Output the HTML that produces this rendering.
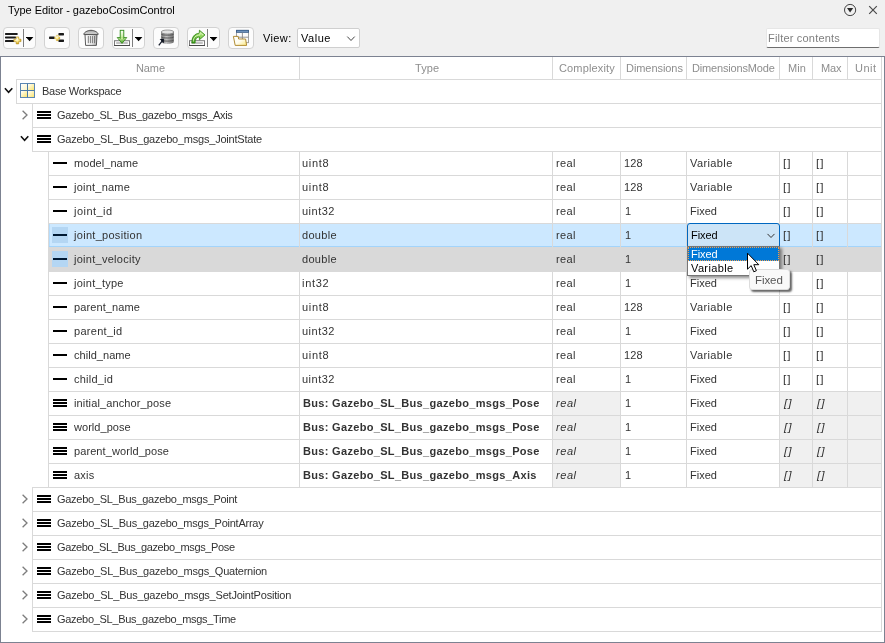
<!DOCTYPE html>
<html><head><meta charset="utf-8"><title>Type Editor</title>
<style>
html,body{margin:0;padding:0}
body{width:885px;height:643px;overflow:hidden;background:#f0f0f0;position:relative;font-family:"Liberation Sans",sans-serif;font-size:11px}
.b{position:absolute;display:block}
.t{position:absolute;white-space:nowrap;display:block;will-change:transform}
.btn{position:absolute;top:27px;height:20px;border:1px solid #d2d2d2;border-radius:4px;background:#fcfcfc}
</style></head><body>
<!-- title bar icons -->
<svg class="b" style="left:843px;top:3px" width="14" height="14" viewBox="0 0 14 14"><circle cx="7.1" cy="7" r="5.6" fill="none" stroke="#444" stroke-width="1"/><path d="M4 5.1 H10.2 L7.1 9.6 Z" fill="#2b2b2b"/></svg>
<svg class="b" style="left:868px;top:5px" width="10" height="10" viewBox="0 0 10 10"><path d="M1.2 1.2 L8.8 8.8 M8.8 1.2 L1.2 8.8" stroke="#4a4a4a" stroke-width="1.2" fill="none"/></svg>

<!-- toolbar buttons -->
<div class="btn" style="left:3px;width:31px"></div>
<div class="btn" style="left:44px;width:24px"></div>
<div class="btn" style="left:78px;width:24px"></div>
<div class="btn" style="left:112px;width:31px"></div>
<div class="btn" style="left:153px;width:24px"></div>
<div class="btn" style="left:187px;width:31px"></div>
<div class="btn" style="left:228px;width:24px"></div>
<div class="b" style="left:23px;top:29px;width:1px;height:18px;background:#7d7d7d"></div>
<div class="b" style="left:132px;top:29px;width:1px;height:18px;background:#7d7d7d"></div>
<div class="b" style="left:207px;top:29px;width:1px;height:18px;background:#7d7d7d"></div>
<svg class="b" style="left:26px;top:37px" width="8" height="5" viewBox="0 0 8 5"><path d="M-0.2 0 H7.4 L3.6 4.2 Z" fill="#000"/></svg>
<svg class="b" style="left:135px;top:37px" width="8" height="5" viewBox="0 0 8 5"><path d="M-0.2 0 H7.4 L3.6 4.2 Z" fill="#000"/></svg>
<svg class="b" style="left:210px;top:37px" width="8" height="5" viewBox="0 0 8 5"><path d="M-0.2 0 H7.4 L3.6 4.2 Z" fill="#000"/></svg>

<!-- icon 1: add bus (lines + plus) -->
<svg class="b" style="left:4px;top:30px" width="19" height="16" viewBox="0 0 19 16">
  <defs><radialGradient id="gold" cx="0.4" cy="0.35" r="0.7"><stop offset="0" stop-color="#ffffff"/><stop offset="0.45" stop-color="#fbe88a"/><stop offset="1" stop-color="#c99a10"/></radialGradient></defs>
  <rect x="1" y="3.1" width="12.7" height="1.8" rx="0.6" fill="#1c1c1c"/>
  <rect x="1" y="6.5" width="11" height="1.9" rx="0.6" fill="#1c1c1c"/>
  <rect x="1" y="10.1" width="9" height="1.9" rx="0.6" fill="#1c1c1c"/>
  <path d="M12.2 6.9 h2.5 v2.3 h2.3 v2.4 h-2.3 v2.3 h-2.5 v-2.3 h-2.3 v-2.4 h2.3 z" fill="url(#gold)" stroke="#b98d10" stroke-width="0.6"/>
</svg>
<!-- icon 2: add element -->
<svg class="b" style="left:47px;top:30px" width="20" height="16" viewBox="0 0 20 16">
  <rect x="2.1" y="6.6" width="5.6" height="2.5" rx="0.6" fill="#1a1a1a"/>
  <rect x="11.4" y="3.1" width="5.6" height="2.3" rx="0.6" fill="#1a1a1a"/>
  <rect x="11.4" y="9.5" width="5.6" height="2.4" rx="0.6" fill="#1a1a1a"/>
  <path d="M9.3 5.2 h2 v1.7 h1.6 v2 h-1.6 v1.8 h-2 v-1.8 h-1.6 v-2 h1.6 z" fill="url(#gold)" stroke="#d4ae2c" stroke-width="0.3"/>
</svg>
<!-- icon 3: trash -->
<svg class="b" style="left:82px;top:29px" width="18" height="18" viewBox="0 0 18 18">
  <defs><linearGradient id="tr" x1="0" y1="0" x2="1" y2="0"><stop offset="0" stop-color="#ffffff"/><stop offset="0.55" stop-color="#ededed"/><stop offset="1" stop-color="#a8a8a8"/></linearGradient>
  <linearGradient id="lid" x1="0" y1="0" x2="0" y2="1"><stop offset="0" stop-color="#9a9a9a"/><stop offset="1" stop-color="#e9e9e9"/></linearGradient></defs>
  <path d="M3 5.6 L3.6 16.4 H14.4 L15 5.6 Z" fill="url(#tr)" stroke="#4a4a4a" stroke-width="0.9"/>
  <path d="M1.8 5.4 C1.8 3.4 5.6 1.3 9 1.3 C12.4 1.3 16.2 3.4 16.2 5.4 Z" fill="url(#lid)" stroke="#444" stroke-width="0.9"/>
  <path d="M6.3 7 V14.2 M8.4 7 V14.2 M10.4 7 V14.2 M12.5 7 V14.2" stroke="#6f6f6f" stroke-width="0.9"/>
</svg>
<!-- icon 4: import (green down arrow + tray) -->
<svg class="b" style="left:113px;top:29px" width="18" height="18" viewBox="0 0 18 18">
  <defs><linearGradient id="gr" x1="0" y1="0" x2="0" y2="1"><stop offset="0" stop-color="#d6f3b0"/><stop offset="1" stop-color="#3a9a17"/></linearGradient>
  <linearGradient id="grs" x1="0" y1="0" x2="0" y2="1"><stop offset="0" stop-color="#ffffff"/><stop offset="1" stop-color="#bfe88f"/></linearGradient></defs>
  <rect x="1.5" y="11.7" width="15" height="4.8" fill="#fdfdfd" stroke="#7a7a7a" stroke-width="1"/>
  <path d="M1 16.5 H17" stroke="#4a4a4a" stroke-width="1"/>
  <rect x="3.2" y="13.2" width="11.6" height="1.6" fill="#b4b4b4"/>
  <path d="M4.2 8.5 H13.8 L9 14.4 Z" fill="url(#gr)" stroke="#2f8416" stroke-width="0.8"/>
  <rect x="7.2" y="1.3" width="3.6" height="8" fill="url(#grs)" stroke="#2f8a1a" stroke-width="0.9"/>
  <path d="M7.7 8.6 H10.3 V10 H7.7 Z" fill="#c4ea96"/>
</svg>
<!-- icon 5: database with arrow -->
<svg class="b" style="left:157px;top:29px" width="19" height="18" viewBox="0 0 19 18">
  <defs><linearGradient id="db" x1="0" y1="0" x2="1" y2="0"><stop offset="0" stop-color="#707070"/><stop offset="0.4" stop-color="#c2c2c2"/><stop offset="1" stop-color="#6c6c6c"/></linearGradient></defs>
  <path d="M4.2 3 V12.8 C4.2 14.2 7.2 14.9 10.5 14.9 C13.8 14.9 16.8 14.2 16.8 12.8 V3 Z" fill="url(#db)"/>
  <ellipse cx="10.5" cy="3" rx="6.3" ry="2" fill="#e2e2e2" stroke="#777" stroke-width="0.7"/>
  <path d="M4.2 5 C4.2 6.6 16.8 6.6 16.8 5 M4.2 7.8 C4.2 9.4 16.8 9.4 16.8 7.8 M4.2 10.9 C4.2 12.5 16.8 12.5 16.8 10.9" fill="none" stroke="#505050" stroke-width="0.9"/>
  <path d="M1.8 16.4 L5.6 11.4" stroke="#1c2230" stroke-width="1.3"/>
  <path d="M2.6 10 L6.9 9.7 L6.9 14.2 Z" fill="#0e1420"/>
</svg>
<!-- icon 6: export (green curved arrow + tray) -->
<svg class="b" style="left:188px;top:29px" width="18" height="18" viewBox="0 0 18 18">
  <defs><linearGradient id="gr2" x1="0" y1="1" x2="1" y2="0"><stop offset="0" stop-color="#2f8f12"/><stop offset="0.6" stop-color="#8fd45a"/><stop offset="1" stop-color="#c8f09a"/></linearGradient></defs>
  <rect x="1.5" y="11.7" width="15" height="4.8" fill="#fdfdfd" stroke="#7a7a7a" stroke-width="1"/>
  <path d="M1 16.5 H17" stroke="#4a4a4a" stroke-width="1"/>
  <rect x="3.2" y="13.2" width="11.6" height="1.6" fill="#b4b4b4"/>
  <path d="M3.9 14 C3.6 8.4 6.2 4.6 11.4 4.2 V1.2 L17 5.9 L11.4 10.8 V8 C8.9 8.1 7.2 9.8 7.1 14 Z" fill="url(#gr2)" stroke="#2e8512" stroke-width="0.8"/>
  <path d="M5.3 12.6 C5.4 8.6 7.6 6.2 12 6 L12 3.6 L15 6" fill="none" stroke="#e4f8c8" stroke-width="1" opacity="0.85"/>
</svg>
<!-- icon 7: table + folder -->
<svg class="b" style="left:232px;top:29px" width="19" height="18" viewBox="0 0 19 18">
  <defs><linearGradient id="fo" x1="0" y1="0" x2="1" y2="1"><stop offset="0" stop-color="#ffffff"/><stop offset="0.5" stop-color="#fffdf0"/><stop offset="1" stop-color="#fce97f"/></linearGradient></defs>
  <rect x="4.5" y="1.3" width="12" height="12.4" fill="#fbfbfb" stroke="#8c8c8c" stroke-width="0.8"/>
  <rect x="4.1" y="0.9" width="12.8" height="2.9" fill="#365a86"/>
  <rect x="5" y="1.8" width="11" height="0.9" fill="#86a9d2"/>
  <path d="M10.4 3.8 V13.6 M4.5 8.2 H16.5" stroke="#8a8a8a" stroke-width="0.9"/>
  <path d="M1.4 7.4 H6.2 L6.6 10 H13.6 L14.6 16.4 H3.2 Z" fill="url(#fo)" stroke="#a8801f" stroke-width="0.9"/>
</svg>

<!-- view select -->
<div class="b" style="left:297px;top:28px;width:61px;height:18px;background:#fff;border:1px solid #cfcfcf;border-radius:2px"></div>
<svg class="b" style="left:346px;top:35px" width="10" height="7" viewBox="0 0 10 7"><path d="M1.3 1.6 L5 5.5 L8.7 1.6" fill="none" stroke="#444" stroke-width="1"/></svg>
<!-- filter box -->
<div class="b" style="left:766px;top:28px;width:112px;height:18px;background:#fff;border:1px solid #e6e6e6;border-bottom:1px solid #6e6e6e;border-radius:2px"></div>

<div class="b" style="left:0;top:56px;width:883px;height:585px;background:#fff;border:1px solid #7c8291"></div>
<div class="b" style="left:553px;top:392px;width:67px;height:23px;background:#f0f0f0;"></div>
<div class="b" style="left:780px;top:392px;width:32px;height:23px;background:#f0f0f0;"></div>
<div class="b" style="left:813px;top:392px;width:34px;height:23px;background:#f0f0f0;"></div>
<div class="b" style="left:848px;top:392px;width:33px;height:23px;background:#f0f0f0;"></div>
<div class="b" style="left:553px;top:416px;width:67px;height:23px;background:#f0f0f0;"></div>
<div class="b" style="left:780px;top:416px;width:32px;height:23px;background:#f0f0f0;"></div>
<div class="b" style="left:813px;top:416px;width:34px;height:23px;background:#f0f0f0;"></div>
<div class="b" style="left:848px;top:416px;width:33px;height:23px;background:#f0f0f0;"></div>
<div class="b" style="left:553px;top:440px;width:67px;height:23px;background:#f0f0f0;"></div>
<div class="b" style="left:780px;top:440px;width:32px;height:23px;background:#f0f0f0;"></div>
<div class="b" style="left:813px;top:440px;width:34px;height:23px;background:#f0f0f0;"></div>
<div class="b" style="left:848px;top:440px;width:33px;height:23px;background:#f0f0f0;"></div>
<div class="b" style="left:553px;top:464px;width:67px;height:23px;background:#f0f0f0;"></div>
<div class="b" style="left:780px;top:464px;width:32px;height:23px;background:#f0f0f0;"></div>
<div class="b" style="left:813px;top:464px;width:34px;height:23px;background:#f0f0f0;"></div>
<div class="b" style="left:848px;top:464px;width:33px;height:23px;background:#f0f0f0;"></div>
<div class="b" style="left:49px;top:224px;width:832px;height:23px;background:#cce8ff;box-shadow:inset 0 -1px 0 #a3d4fb, inset 1px 0 0 #b5dcfc"></div>
<div class="b" style="left:49px;top:247px;width:832px;height:24px;background:#d9d9d9;"></div>
<div class="b" style="left:52px;top:227px;width:16px;height:16px;background:#b4d6f3;"></div>
<div class="b" style="left:52px;top:251px;width:16px;height:16px;background:#b4d6f3;"></div>
<div class="b" style="left:16px;top:79px;width:866px;height:1px;background:#d9d9d9;"></div>
<div class="b" style="left:299px;top:57px;width:1px;height:22px;background:#d9d9d9;"></div>
<div class="b" style="left:552px;top:57px;width:1px;height:22px;background:#d9d9d9;"></div>
<div class="b" style="left:620px;top:57px;width:1px;height:22px;background:#d9d9d9;"></div>
<div class="b" style="left:686px;top:57px;width:1px;height:22px;background:#d9d9d9;"></div>
<div class="b" style="left:779px;top:57px;width:1px;height:22px;background:#d9d9d9;"></div>
<div class="b" style="left:812px;top:57px;width:1px;height:22px;background:#d9d9d9;"></div>
<div class="b" style="left:847px;top:57px;width:1px;height:22px;background:#d9d9d9;"></div>
<div class="b" style="left:881px;top:57px;width:1px;height:575px;background:#d9d9d9;"></div>
<div class="b" style="left:16px;top:79px;width:1px;height:25px;background:#d9d9d9;"></div>
<div class="b" style="left:16px;top:103px;width:866px;height:1px;background:#d9d9d9;"></div>
<div class="b" style="left:32px;top:103px;width:1px;height:49px;background:#d9d9d9;"></div>
<div class="b" style="left:32px;top:127px;width:850px;height:1px;background:#d9d9d9;"></div>
<div class="b" style="left:32px;top:151px;width:850px;height:1px;background:#d9d9d9;"></div>
<div class="b" style="left:48px;top:151px;width:1px;height:337px;background:#d9d9d9;"></div>
<div class="b" style="left:48px;top:175px;width:834px;height:1px;background:#d9d9d9;"></div>
<div class="b" style="left:48px;top:199px;width:834px;height:1px;background:#d9d9d9;"></div>
<div class="b" style="left:48px;top:223px;width:834px;height:1px;background:#d9d9d9;"></div>
<div class="b" style="left:48px;top:247px;width:834px;height:1px;background:#d9d9d9;"></div>
<div class="b" style="left:48px;top:271px;width:834px;height:1px;background:#d9d9d9;"></div>
<div class="b" style="left:48px;top:295px;width:834px;height:1px;background:#d9d9d9;"></div>
<div class="b" style="left:48px;top:319px;width:834px;height:1px;background:#d9d9d9;"></div>
<div class="b" style="left:48px;top:343px;width:834px;height:1px;background:#d9d9d9;"></div>
<div class="b" style="left:48px;top:367px;width:834px;height:1px;background:#d9d9d9;"></div>
<div class="b" style="left:48px;top:391px;width:834px;height:1px;background:#d9d9d9;"></div>
<div class="b" style="left:48px;top:415px;width:834px;height:1px;background:#d9d9d9;"></div>
<div class="b" style="left:48px;top:439px;width:834px;height:1px;background:#d9d9d9;"></div>
<div class="b" style="left:48px;top:463px;width:834px;height:1px;background:#d9d9d9;"></div>
<div class="b" style="left:32px;top:487px;width:850px;height:1px;background:#d9d9d9;"></div>
<div class="b" style="left:32px;top:487px;width:1px;height:145px;background:#d9d9d9;"></div>
<div class="b" style="left:32px;top:511px;width:850px;height:1px;background:#d9d9d9;"></div>
<div class="b" style="left:32px;top:535px;width:850px;height:1px;background:#d9d9d9;"></div>
<div class="b" style="left:32px;top:559px;width:850px;height:1px;background:#d9d9d9;"></div>
<div class="b" style="left:32px;top:583px;width:850px;height:1px;background:#d9d9d9;"></div>
<div class="b" style="left:32px;top:607px;width:850px;height:1px;background:#d9d9d9;"></div>
<div class="b" style="left:32px;top:631px;width:850px;height:1px;background:#d9d9d9;"></div>
<div class="b" style="left:299px;top:152px;width:1px;height:95px;background:#d9d9d9;"></div>
<div class="b" style="left:299px;top:271px;width:1px;height:216px;background:#d9d9d9;"></div>
<div class="b" style="left:552px;top:152px;width:1px;height:95px;background:#d9d9d9;"></div>
<div class="b" style="left:552px;top:271px;width:1px;height:216px;background:#d9d9d9;"></div>
<div class="b" style="left:620px;top:152px;width:1px;height:95px;background:#d9d9d9;"></div>
<div class="b" style="left:620px;top:271px;width:1px;height:216px;background:#d9d9d9;"></div>
<div class="b" style="left:686px;top:152px;width:1px;height:95px;background:#d9d9d9;"></div>
<div class="b" style="left:686px;top:271px;width:1px;height:216px;background:#d9d9d9;"></div>
<div class="b" style="left:779px;top:152px;width:1px;height:95px;background:#d9d9d9;"></div>
<div class="b" style="left:779px;top:271px;width:1px;height:216px;background:#d9d9d9;"></div>
<div class="b" style="left:812px;top:152px;width:1px;height:95px;background:#d9d9d9;"></div>
<div class="b" style="left:812px;top:271px;width:1px;height:216px;background:#d9d9d9;"></div>
<div class="b" style="left:847px;top:152px;width:1px;height:95px;background:#d9d9d9;"></div>
<div class="b" style="left:847px;top:271px;width:1px;height:216px;background:#d9d9d9;"></div>
<div class="b" style="left:37px;top:111px;width:14px;height:2px;background:#000;box-shadow:0 3px 0 #000,0 6px 0 #000"></div>
<div class="b" style="left:37px;top:135px;width:14px;height:2px;background:#000;box-shadow:0 3px 0 #000,0 6px 0 #000"></div>
<div class="b" style="left:53px;top:162px;width:14px;height:2px;background:#000"></div>
<div class="b" style="left:53px;top:186px;width:14px;height:2px;background:#000"></div>
<div class="b" style="left:53px;top:210px;width:14px;height:2px;background:#000"></div>
<div class="b" style="left:53px;top:234px;width:14px;height:2px;background:#001933"></div>
<div class="b" style="left:53px;top:258px;width:14px;height:2px;background:#001933"></div>
<div class="b" style="left:53px;top:282px;width:14px;height:2px;background:#000"></div>
<div class="b" style="left:53px;top:306px;width:14px;height:2px;background:#000"></div>
<div class="b" style="left:53px;top:330px;width:14px;height:2px;background:#000"></div>
<div class="b" style="left:53px;top:354px;width:14px;height:2px;background:#000"></div>
<div class="b" style="left:53px;top:378px;width:14px;height:2px;background:#000"></div>
<div class="b" style="left:53px;top:399px;width:14px;height:2px;background:#000;box-shadow:0 3px 0 #000,0 6px 0 #000"></div>
<div class="b" style="left:53px;top:423px;width:14px;height:2px;background:#000;box-shadow:0 3px 0 #000,0 6px 0 #000"></div>
<div class="b" style="left:53px;top:447px;width:14px;height:2px;background:#000;box-shadow:0 3px 0 #000,0 6px 0 #000"></div>
<div class="b" style="left:53px;top:471px;width:14px;height:2px;background:#000;box-shadow:0 3px 0 #000,0 6px 0 #000"></div>
<div class="b" style="left:37px;top:495px;width:14px;height:2px;background:#000;box-shadow:0 3px 0 #000,0 6px 0 #000"></div>
<div class="b" style="left:37px;top:519px;width:14px;height:2px;background:#000;box-shadow:0 3px 0 #000,0 6px 0 #000"></div>
<div class="b" style="left:37px;top:543px;width:14px;height:2px;background:#000;box-shadow:0 3px 0 #000,0 6px 0 #000"></div>
<div class="b" style="left:37px;top:567px;width:14px;height:2px;background:#000;box-shadow:0 3px 0 #000,0 6px 0 #000"></div>
<div class="b" style="left:37px;top:591px;width:14px;height:2px;background:#000;box-shadow:0 3px 0 #000,0 6px 0 #000"></div>
<div class="b" style="left:37px;top:615px;width:14px;height:2px;background:#000;box-shadow:0 3px 0 #000,0 6px 0 #000"></div>
<svg class="b" style="left:4px;top:87px" width="11" height="8" viewBox="0 0 11 8"><path d="M0.9 1.2 L4.6 5.2 L8.3 1.2" fill="none" stroke="#111" stroke-width="1.6"/></svg>
<svg class="b" style="left:21px;top:110px" width="8" height="10" viewBox="0 0 8 10"><path d="M1.6 0.8 L6 5 L1.6 9.2" fill="none" stroke="#7d7d7d" stroke-width="1.3"/></svg>
<svg class="b" style="left:20px;top:135px" width="11" height="8" viewBox="0 0 11 8"><path d="M0.9 1.2 L4.6 5.2 L8.3 1.2" fill="none" stroke="#111" stroke-width="1.6"/></svg>
<svg class="b" style="left:21px;top:494px" width="8" height="10" viewBox="0 0 8 10"><path d="M1.6 0.8 L6 5 L1.6 9.2" fill="none" stroke="#7d7d7d" stroke-width="1.3"/></svg>
<svg class="b" style="left:21px;top:518px" width="8" height="10" viewBox="0 0 8 10"><path d="M1.6 0.8 L6 5 L1.6 9.2" fill="none" stroke="#7d7d7d" stroke-width="1.3"/></svg>
<svg class="b" style="left:21px;top:542px" width="8" height="10" viewBox="0 0 8 10"><path d="M1.6 0.8 L6 5 L1.6 9.2" fill="none" stroke="#7d7d7d" stroke-width="1.3"/></svg>
<svg class="b" style="left:21px;top:566px" width="8" height="10" viewBox="0 0 8 10"><path d="M1.6 0.8 L6 5 L1.6 9.2" fill="none" stroke="#7d7d7d" stroke-width="1.3"/></svg>
<svg class="b" style="left:21px;top:590px" width="8" height="10" viewBox="0 0 8 10"><path d="M1.6 0.8 L6 5 L1.6 9.2" fill="none" stroke="#7d7d7d" stroke-width="1.3"/></svg>
<svg class="b" style="left:21px;top:614px" width="8" height="10" viewBox="0 0 8 10"><path d="M1.6 0.8 L6 5 L1.6 9.2" fill="none" stroke="#7d7d7d" stroke-width="1.3"/></svg>
<!-- base workspace icon -->
<svg class="b" style="left:20px;top:83px" width="16" height="16" viewBox="0 0 16 16">
  <defs><linearGradient id="ws" x1="0" y1="0" x2="1" y2="1"><stop offset="0" stop-color="#ffffff"/><stop offset="1" stop-color="#fbe56e"/></linearGradient>
  <linearGradient id="ws0" x1="0" y1="0" x2="1" y2="1"><stop offset="0" stop-color="#ffffff"/><stop offset="1" stop-color="#fdf6c8"/></linearGradient></defs>
  <rect x="0.5" y="0.5" width="14" height="14" fill="#fff" stroke="#5c87b2" stroke-width="1"/>
  <rect x="1" y="1" width="6" height="6" fill="url(#ws0)"/><rect x="8" y="1" width="6" height="6" fill="url(#ws)"/>
  <rect x="1" y="8" width="6" height="6" fill="url(#ws)"/><rect x="8" y="8" width="6" height="6" fill="url(#ws)"/>
  <path d="M7.5 0.5 V14.5 M0.5 7.5 H14.5" stroke="#4b7aa8" stroke-width="1"/>
</svg>
<!-- combobox -->
<div class="b" style="left:687px;top:223px;width:91px;height:22px;background:#cce4f7;border:1px solid #0067c0;border-radius:3px 3px 0 0;z-index:5"></div>
<svg class="b" style="left:766px;top:232px;z-index:6" width="10" height="7" viewBox="0 0 10 7"><path d="M1.5 1.9 L5 5.5 L8.5 1.9" fill="none" stroke="#333" stroke-width="1"/></svg>
<!-- dropdown list -->
<div class="b" style="left:687px;top:246px;width:91px;height:28px;background:#fff;border:1px solid #767676;box-shadow:2px 2px 3px rgba(0,0,0,0.45);z-index:7"></div>
<div class="b" style="left:688px;top:247px;width:89px;height:12px;background:#0078d7;border:1px dotted #f0a050;z-index:7"></div>
<!-- tooltip -->
<div class="b" style="left:749px;top:269px;width:39px;height:19px;background:#f9f9f9;border:1px solid #dcdcdc;border-radius:3px;box-shadow:2px 2px 2px rgba(0,0,0,0.6);z-index:11"></div>
<!-- cursor -->
<svg class="b" style="left:746px;top:252px;z-index:13" width="14" height="22" viewBox="0 0 14 22"><path d="M1.5 1.2 V17.2 L5.2 13.6 L7.8 19.8 L10.4 18.7 L7.8 12.7 H12.8 Z" fill="#fff" stroke="#000" stroke-width="1"/></svg>

<span class="t" style="left:7.5px;top:3.2px;font-size:11px;line-height:14px;letter-spacing:-0.043px;color:#000">Type Editor - gazeboCosimControl</span>
<span class="t" style="left:263.0px;top:31.2px;font-size:11px;line-height:14px;letter-spacing:0.374px;color:#000">View:</span>
<span class="t" style="left:300.6px;top:31.2px;font-size:11px;line-height:14px;letter-spacing:0.518px;color:#000">Value</span>
<span class="t" style="left:767.9px;top:31.2px;font-size:11px;line-height:14px;letter-spacing:0.193px;color:#7f7f7f">Filter contents</span>
<span class="t" style="left:135.9px;top:61.2px;font-size:11px;line-height:14px;letter-spacing:-0.115px;color:#8e8e8e">Name</span>
<span class="t" style="left:414.8px;top:61.2px;font-size:11px;line-height:14px;letter-spacing:0.114px;color:#8e8e8e">Type</span>
<span class="t" style="left:559.4px;top:61.2px;font-size:11px;line-height:14px;letter-spacing:0.155px;color:#8e8e8e">Complexity</span>
<span class="t" style="left:625.7px;top:61.2px;font-size:11px;line-height:14px;letter-spacing:-0.063px;color:#8e8e8e">Dimensions</span>
<span class="t" style="left:691.9px;top:61.2px;font-size:11px;line-height:14px;letter-spacing:-0.160px;color:#8e8e8e">DimensionsMode</span>
<span class="t" style="left:787.7px;top:61.2px;font-size:11px;line-height:14px;letter-spacing:0.083px;color:#8e8e8e">Min</span>
<span class="t" style="left:820.8px;top:61.2px;font-size:11px;line-height:14px;letter-spacing:-0.191px;color:#8e8e8e">Max</span>
<span class="t" style="left:854.6px;top:61.2px;font-size:11px;line-height:14px;letter-spacing:0.513px;color:#8e8e8e">Unit</span>
<span class="t" style="left:42.1px;top:84.2px;font-size:11px;line-height:14px;letter-spacing:-0.258px;color:#333">Base Workspace</span>
<span class="t" style="left:57.4px;top:108.2px;font-size:11px;line-height:14px;letter-spacing:-0.306px;color:#333">Gazebo_SL_Bus_gazebo_msgs_Axis</span>
<span class="t" style="left:57.4px;top:132.2px;font-size:11px;line-height:14px;letter-spacing:-0.221px;color:#333">Gazebo_SL_Bus_gazebo_msgs_JointState</span>
<span class="t" style="left:73.7px;top:156.2px;font-size:11px;line-height:14px;letter-spacing:0.056px;color:#333">model_name</span>
<span class="t" style="left:302.4px;top:156.2px;font-size:11px;line-height:14px;letter-spacing:0.685px;color:#333">uint8</span>
<span class="t" style="left:555.7px;top:156.2px;font-size:11px;line-height:14px;letter-spacing:0.352px;color:#333">real</span>
<span class="t" style="left:624.2px;top:156.2px;font-size:11px;line-height:14px;letter-spacing:0.120px;color:#333">128</span>
<span class="t" style="left:689.5px;top:156.2px;font-size:11px;line-height:14px;letter-spacing:0.393px;color:#333">Variable</span>
<span class="t" style="left:783.4px;top:154.6px;font-size:11.8px;line-height:16px;letter-spacing:1.000px;color:#333">[]</span>
<span class="t" style="left:816.4px;top:154.6px;font-size:11.8px;line-height:16px;letter-spacing:1.000px;color:#333">[]</span>
<span class="t" style="left:73.7px;top:180.2px;font-size:11px;line-height:14px;letter-spacing:0.230px;color:#333">joint_name</span>
<span class="t" style="left:302.4px;top:180.2px;font-size:11px;line-height:14px;letter-spacing:0.685px;color:#333">uint8</span>
<span class="t" style="left:555.7px;top:180.2px;font-size:11px;line-height:14px;letter-spacing:0.352px;color:#333">real</span>
<span class="t" style="left:624.2px;top:180.2px;font-size:11px;line-height:14px;letter-spacing:0.120px;color:#333">128</span>
<span class="t" style="left:689.5px;top:180.2px;font-size:11px;line-height:14px;letter-spacing:0.393px;color:#333">Variable</span>
<span class="t" style="left:783.4px;top:178.6px;font-size:11.8px;line-height:16px;letter-spacing:1.000px;color:#333">[]</span>
<span class="t" style="left:816.4px;top:178.6px;font-size:11.8px;line-height:16px;letter-spacing:1.000px;color:#333">[]</span>
<span class="t" style="left:73.7px;top:204.2px;font-size:11px;line-height:14px;letter-spacing:0.463px;color:#333">joint_id</span>
<span class="t" style="left:302.4px;top:204.2px;font-size:11px;line-height:14px;letter-spacing:0.503px;color:#333">uint32</span>
<span class="t" style="left:555.7px;top:204.2px;font-size:11px;line-height:14px;letter-spacing:0.352px;color:#333">real</span>
<span class="t" style="left:624.6px;top:204.2px;font-size:11px;line-height:14px;letter-spacing:-0.600px;color:#333">1</span>
<span class="t" style="left:689.8px;top:204.2px;font-size:11px;line-height:14px;letter-spacing:0.023px;color:#333">Fixed</span>
<span class="t" style="left:783.4px;top:202.6px;font-size:11.8px;line-height:16px;letter-spacing:1.000px;color:#333">[]</span>
<span class="t" style="left:816.4px;top:202.6px;font-size:11.8px;line-height:16px;letter-spacing:1.000px;color:#333">[]</span>
<span class="t" style="left:73.7px;top:228.2px;font-size:11px;line-height:14px;letter-spacing:0.291px;color:#333">joint_position</span>
<span class="t" style="left:302.4px;top:228.2px;font-size:11px;line-height:14px;letter-spacing:0.311px;color:#333">double</span>
<span class="t" style="left:555.7px;top:228.2px;font-size:11px;line-height:14px;letter-spacing:0.352px;color:#333">real</span>
<span class="t" style="left:624.6px;top:228.2px;font-size:11px;line-height:14px;letter-spacing:-0.600px;color:#333">1</span>
<span class="t" style="left:783.4px;top:226.6px;font-size:11.8px;line-height:16px;letter-spacing:1.000px;color:#333">[]</span>
<span class="t" style="left:816.4px;top:226.6px;font-size:11.8px;line-height:16px;letter-spacing:1.000px;color:#333">[]</span>
<span class="t" style="left:73.7px;top:252.2px;font-size:11px;line-height:14px;letter-spacing:0.270px;color:#333">joint_velocity</span>
<span class="t" style="left:302.4px;top:252.2px;font-size:11px;line-height:14px;letter-spacing:0.311px;color:#333">double</span>
<span class="t" style="left:555.7px;top:252.2px;font-size:11px;line-height:14px;letter-spacing:0.352px;color:#333">real</span>
<span class="t" style="left:624.6px;top:252.2px;font-size:11px;line-height:14px;letter-spacing:-0.600px;color:#333">1</span>
<span class="t" style="left:783.4px;top:250.6px;font-size:11.8px;line-height:16px;letter-spacing:1.000px;color:#333">[]</span>
<span class="t" style="left:816.4px;top:250.6px;font-size:11.8px;line-height:16px;letter-spacing:1.000px;color:#333">[]</span>
<span class="t" style="left:73.7px;top:276.2px;font-size:11px;line-height:14px;letter-spacing:0.267px;color:#333">joint_type</span>
<span class="t" style="left:302.4px;top:276.2px;font-size:11px;line-height:14px;letter-spacing:0.685px;color:#333">int32</span>
<span class="t" style="left:555.7px;top:276.2px;font-size:11px;line-height:14px;letter-spacing:0.352px;color:#333">real</span>
<span class="t" style="left:624.6px;top:276.2px;font-size:11px;line-height:14px;letter-spacing:-0.600px;color:#333">1</span>
<span class="t" style="left:689.8px;top:276.2px;font-size:11px;line-height:14px;letter-spacing:0.023px;color:#333">Fixed</span>
<span class="t" style="left:783.4px;top:274.6px;font-size:11.8px;line-height:16px;letter-spacing:1.000px;color:#333">[]</span>
<span class="t" style="left:816.4px;top:274.6px;font-size:11.8px;line-height:16px;letter-spacing:1.000px;color:#333">[]</span>
<span class="t" style="left:73.7px;top:300.2px;font-size:11px;line-height:14px;letter-spacing:0.107px;color:#333">parent_name</span>
<span class="t" style="left:302.4px;top:300.2px;font-size:11px;line-height:14px;letter-spacing:0.685px;color:#333">uint8</span>
<span class="t" style="left:555.7px;top:300.2px;font-size:11px;line-height:14px;letter-spacing:0.352px;color:#333">real</span>
<span class="t" style="left:624.2px;top:300.2px;font-size:11px;line-height:14px;letter-spacing:0.120px;color:#333">128</span>
<span class="t" style="left:689.5px;top:300.2px;font-size:11px;line-height:14px;letter-spacing:0.393px;color:#333">Variable</span>
<span class="t" style="left:783.4px;top:298.6px;font-size:11.8px;line-height:16px;letter-spacing:1.000px;color:#333">[]</span>
<span class="t" style="left:816.4px;top:298.6px;font-size:11.8px;line-height:16px;letter-spacing:1.000px;color:#333">[]</span>
<span class="t" style="left:73.7px;top:324.2px;font-size:11px;line-height:14px;letter-spacing:0.291px;color:#333">parent_id</span>
<span class="t" style="left:302.4px;top:324.2px;font-size:11px;line-height:14px;letter-spacing:0.503px;color:#333">uint32</span>
<span class="t" style="left:555.7px;top:324.2px;font-size:11px;line-height:14px;letter-spacing:0.352px;color:#333">real</span>
<span class="t" style="left:624.6px;top:324.2px;font-size:11px;line-height:14px;letter-spacing:-0.600px;color:#333">1</span>
<span class="t" style="left:689.8px;top:324.2px;font-size:11px;line-height:14px;letter-spacing:0.023px;color:#333">Fixed</span>
<span class="t" style="left:783.4px;top:322.6px;font-size:11.8px;line-height:16px;letter-spacing:1.000px;color:#333">[]</span>
<span class="t" style="left:816.4px;top:322.6px;font-size:11.8px;line-height:16px;letter-spacing:1.000px;color:#333">[]</span>
<span class="t" style="left:73.7px;top:348.2px;font-size:11px;line-height:14px;letter-spacing:0.048px;color:#333">child_name</span>
<span class="t" style="left:302.4px;top:348.2px;font-size:11px;line-height:14px;letter-spacing:0.685px;color:#333">uint8</span>
<span class="t" style="left:555.7px;top:348.2px;font-size:11px;line-height:14px;letter-spacing:0.352px;color:#333">real</span>
<span class="t" style="left:624.2px;top:348.2px;font-size:11px;line-height:14px;letter-spacing:0.120px;color:#333">128</span>
<span class="t" style="left:689.5px;top:348.2px;font-size:11px;line-height:14px;letter-spacing:0.393px;color:#333">Variable</span>
<span class="t" style="left:783.4px;top:346.6px;font-size:11.8px;line-height:16px;letter-spacing:1.000px;color:#333">[]</span>
<span class="t" style="left:816.4px;top:346.6px;font-size:11.8px;line-height:16px;letter-spacing:1.000px;color:#333">[]</span>
<span class="t" style="left:73.7px;top:372.2px;font-size:11px;line-height:14px;letter-spacing:0.227px;color:#333">child_id</span>
<span class="t" style="left:302.4px;top:372.2px;font-size:11px;line-height:14px;letter-spacing:0.503px;color:#333">uint32</span>
<span class="t" style="left:555.7px;top:372.2px;font-size:11px;line-height:14px;letter-spacing:0.352px;color:#333">real</span>
<span class="t" style="left:624.6px;top:372.2px;font-size:11px;line-height:14px;letter-spacing:-0.600px;color:#333">1</span>
<span class="t" style="left:689.8px;top:372.2px;font-size:11px;line-height:14px;letter-spacing:0.023px;color:#333">Fixed</span>
<span class="t" style="left:783.4px;top:370.6px;font-size:11.8px;line-height:16px;letter-spacing:1.000px;color:#333">[]</span>
<span class="t" style="left:816.4px;top:370.6px;font-size:11.8px;line-height:16px;letter-spacing:1.000px;color:#333">[]</span>
<span class="t" style="left:73.7px;top:396.2px;font-size:11px;line-height:14px;letter-spacing:0.128px;color:#333">initial_anchor_pose</span>
<span class="t" style="left:302.9px;top:396.2px;font-size:11px;line-height:14px;letter-spacing:0.318px;color:#333;font-weight:bold">Bus: Gazebo_SL_Bus_gazebo_msgs_Pose</span>
<span class="t" style="left:556.0px;top:396.2px;font-size:11px;line-height:14px;letter-spacing:0.552px;color:#333;font-style:italic">real</span>
<span class="t" style="left:624.6px;top:396.2px;font-size:11px;line-height:14px;letter-spacing:-0.600px;color:#333">1</span>
<span class="t" style="left:689.8px;top:396.2px;font-size:11px;line-height:14px;letter-spacing:0.023px;color:#333">Fixed</span>
<span class="t" style="left:784.2px;top:394.6px;font-size:11.8px;line-height:16px;letter-spacing:1.000px;color:#333;font-style:italic">[]</span>
<span class="t" style="left:817.2px;top:394.6px;font-size:11.8px;line-height:16px;letter-spacing:1.000px;color:#333;font-style:italic">[]</span>
<span class="t" style="left:73.7px;top:420.2px;font-size:11px;line-height:14px;letter-spacing:0.048px;color:#333">world_pose</span>
<span class="t" style="left:302.9px;top:420.2px;font-size:11px;line-height:14px;letter-spacing:0.318px;color:#333;font-weight:bold">Bus: Gazebo_SL_Bus_gazebo_msgs_Pose</span>
<span class="t" style="left:556.0px;top:420.2px;font-size:11px;line-height:14px;letter-spacing:0.552px;color:#333;font-style:italic">real</span>
<span class="t" style="left:624.6px;top:420.2px;font-size:11px;line-height:14px;letter-spacing:-0.600px;color:#333">1</span>
<span class="t" style="left:689.8px;top:420.2px;font-size:11px;line-height:14px;letter-spacing:0.023px;color:#333">Fixed</span>
<span class="t" style="left:784.2px;top:418.6px;font-size:11.8px;line-height:16px;letter-spacing:1.000px;color:#333;font-style:italic">[]</span>
<span class="t" style="left:817.2px;top:418.6px;font-size:11.8px;line-height:16px;letter-spacing:1.000px;color:#333;font-style:italic">[]</span>
<span class="t" style="left:73.7px;top:444.2px;font-size:11px;line-height:14px;letter-spacing:0.089px;color:#333">parent_world_pose</span>
<span class="t" style="left:302.9px;top:444.2px;font-size:11px;line-height:14px;letter-spacing:0.318px;color:#333;font-weight:bold">Bus: Gazebo_SL_Bus_gazebo_msgs_Pose</span>
<span class="t" style="left:556.0px;top:444.2px;font-size:11px;line-height:14px;letter-spacing:0.552px;color:#333;font-style:italic">real</span>
<span class="t" style="left:624.6px;top:444.2px;font-size:11px;line-height:14px;letter-spacing:-0.600px;color:#333">1</span>
<span class="t" style="left:689.8px;top:444.2px;font-size:11px;line-height:14px;letter-spacing:0.023px;color:#333">Fixed</span>
<span class="t" style="left:784.2px;top:442.6px;font-size:11.8px;line-height:16px;letter-spacing:1.000px;color:#333;font-style:italic">[]</span>
<span class="t" style="left:817.2px;top:442.6px;font-size:11.8px;line-height:16px;letter-spacing:1.000px;color:#333;font-style:italic">[]</span>
<span class="t" style="left:73.7px;top:468.2px;font-size:11px;line-height:14px;letter-spacing:0.213px;color:#333">axis</span>
<span class="t" style="left:302.9px;top:468.2px;font-size:11px;line-height:14px;letter-spacing:0.320px;color:#333;font-weight:bold">Bus: Gazebo_SL_Bus_gazebo_msgs_Axis</span>
<span class="t" style="left:556.0px;top:468.2px;font-size:11px;line-height:14px;letter-spacing:0.552px;color:#333;font-style:italic">real</span>
<span class="t" style="left:624.6px;top:468.2px;font-size:11px;line-height:14px;letter-spacing:-0.600px;color:#333">1</span>
<span class="t" style="left:689.8px;top:468.2px;font-size:11px;line-height:14px;letter-spacing:0.023px;color:#333">Fixed</span>
<span class="t" style="left:784.2px;top:466.6px;font-size:11.8px;line-height:16px;letter-spacing:1.000px;color:#333;font-style:italic">[]</span>
<span class="t" style="left:817.2px;top:466.6px;font-size:11.8px;line-height:16px;letter-spacing:1.000px;color:#333;font-style:italic">[]</span>
<span class="t" style="left:57.4px;top:492.2px;font-size:11px;line-height:14px;letter-spacing:-0.286px;color:#333">Gazebo_SL_Bus_gazebo_msgs_Point</span>
<span class="t" style="left:57.4px;top:516.2px;font-size:11px;line-height:14px;letter-spacing:-0.244px;color:#333">Gazebo_SL_Bus_gazebo_msgs_PointArray</span>
<span class="t" style="left:57.4px;top:540.2px;font-size:11px;line-height:14px;letter-spacing:-0.378px;color:#333">Gazebo_SL_Bus_gazebo_msgs_Pose</span>
<span class="t" style="left:57.4px;top:564.2px;font-size:11px;line-height:14px;letter-spacing:-0.232px;color:#333">Gazebo_SL_Bus_gazebo_msgs_Quaternion</span>
<span class="t" style="left:57.4px;top:588.2px;font-size:11px;line-height:14px;letter-spacing:-0.207px;color:#333">Gazebo_SL_Bus_gazebo_msgs_SetJointPosition</span>
<span class="t" style="left:57.4px;top:612.2px;font-size:11px;line-height:14px;letter-spacing:-0.301px;color:#333">Gazebo_SL_Bus_gazebo_msgs_Time</span>
<span class="t" style="left:690.9px;top:227.7px;font-size:11px;line-height:14px;letter-spacing:-0.052px;color:#000;z-index:6">Fixed</span>
<span class="t" style="left:691.2px;top:247.2px;font-size:11px;line-height:14px;letter-spacing:-0.077px;color:#fff;z-index:8">Fixed</span>
<span class="t" style="left:690.7px;top:260.7px;font-size:11px;line-height:14px;letter-spacing:0.365px;color:#000;z-index:8">Variable</span>
<span class="t" style="left:755.4px;top:272.2px;font-size:11.5px;line-height:16px;letter-spacing:-0.081px;color:#575757;z-index:12">Fixed</span>
</body></html>
